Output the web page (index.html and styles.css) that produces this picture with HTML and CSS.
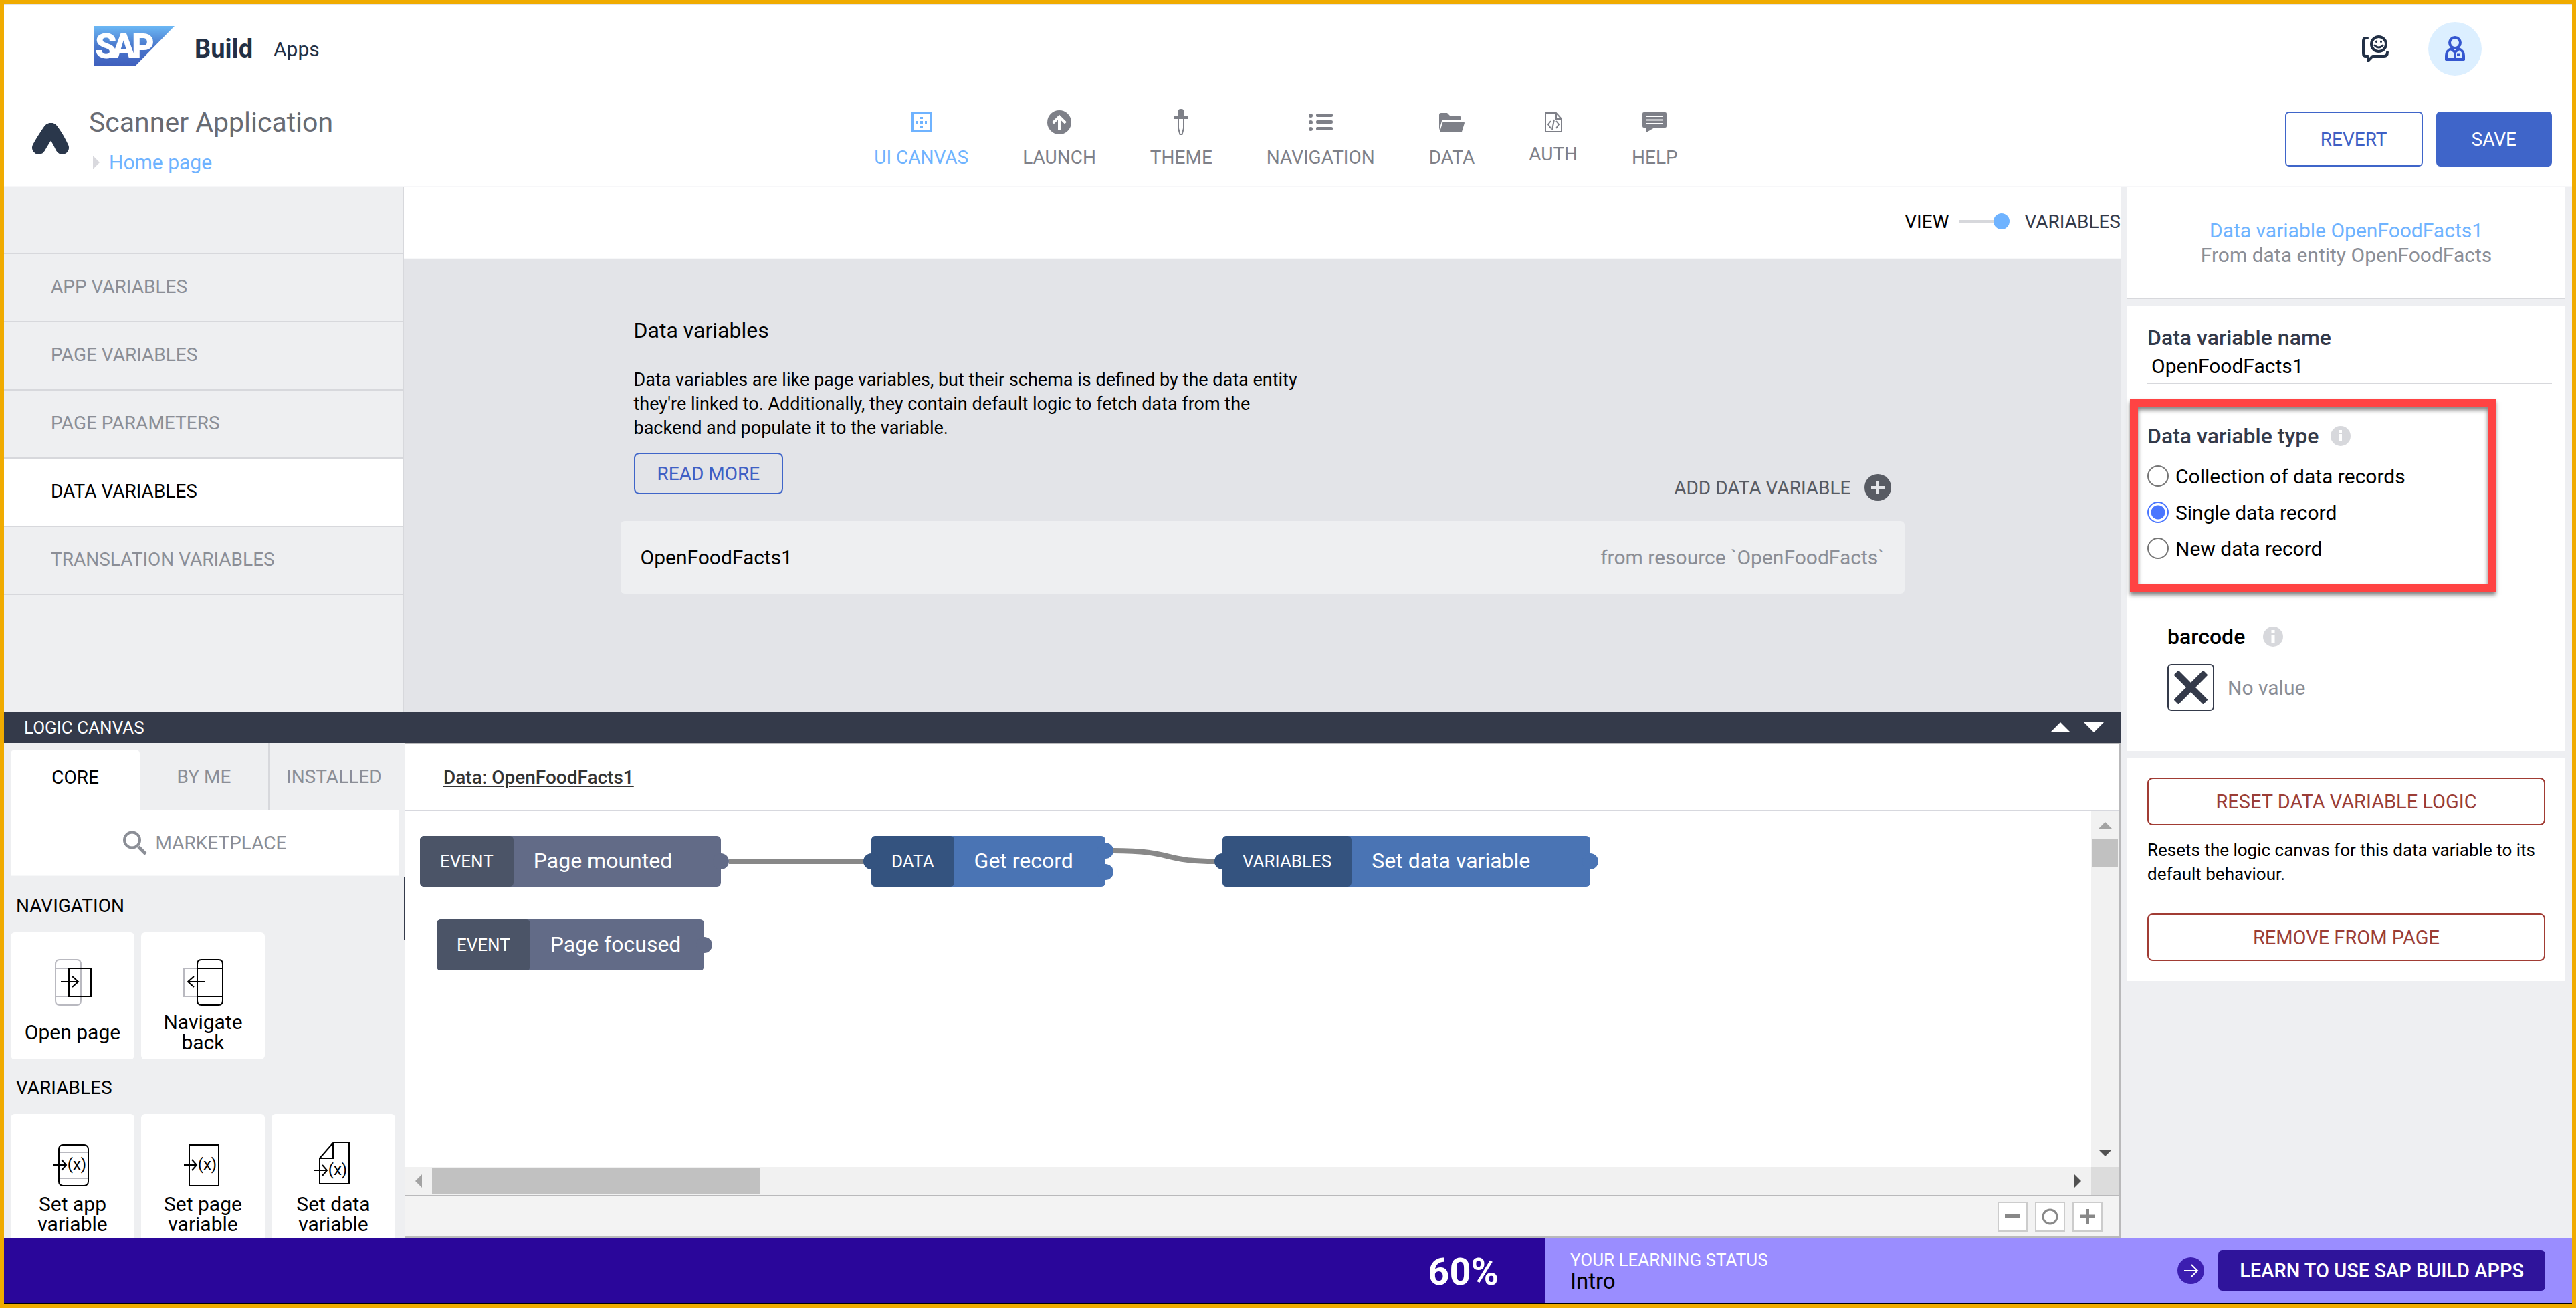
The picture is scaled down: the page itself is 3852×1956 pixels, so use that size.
FILE: index.html
```html
<!DOCTYPE html>
<html lang="en">
<head>
<meta charset="utf-8">
<title>Scanner Application - SAP Build Apps</title>
<link rel="stylesheet" href="styles.css">
</head>
<body>
<div class="app">
  <header class="shell">
    <a class="brand" href="#">
      <svg class="sap" width="120" height="60" viewBox="0 0 120 60" role="img" aria-label="SAP">
        <defs><linearGradient id="sapfill" x1="0" y1="0" x2="0" y2="1"><stop offset="0" stop-color="#6cb8f5"/><stop offset=".5" stop-color="#4a78cc"/><stop offset="1" stop-color="#3f5fbd"/></linearGradient></defs>
        <path d="M0 0H120L61 60H0Z" fill="url(#sapfill)"/>
        <text class="sap-text" x="1 26 56" y="48">SAP</text>
      </svg>
      <span class="brand-name">Build</span><span class="brand-sub">Apps</span>
    </a>
    <div class="shell-tools">
      <button class="icon-btn" aria-label="Feedback">
        <svg width="42" height="42" viewBox="0 0 42 42" fill="none" stroke="#223046" stroke-width="4" stroke-linecap="round" stroke-linejoin="round"><path d="M9 5H7Q3 5 3 9V28Q3 32 7 32H10V39L17 32H34Q39 32 39 26"/><circle cx="26" cy="14" r="11"/><path d="M20 16Q26 22 32 16" stroke-width="3"/><path d="M22.500 10V10.500M29.500 10V10.500" stroke-width="3"/></svg>
      </button>
      <button class="icon-btn avatar" aria-label="Profile">
        <svg width="32" height="38" viewBox="0 0 32 38" fill="none" stroke="#3557d0" stroke-width="4" stroke-linejoin="round"><circle cx="16" cy="10" r="8"/><path d="M3 35V29Q3 22 10 19L16 24 22 19Q29 22 29 29V35Z"/><path d="M16 22V34"/><path d="M19 28H24" stroke-width="3"/></svg>
      </button>
    </div>
  </header>

  <div class="header">
    <div class="project">
      <svg width="56" height="48" viewBox="0 0 56 48" fill="none" stroke="#2a374b" stroke-width="20" stroke-linecap="round" stroke-linejoin="round" aria-hidden="true"><path d="M10 37Q16 26 27 10"/><path d="M45 37Q38 22 29 10"/></svg>
      <div class="project-text">
        <h1 class="project-title">Scanner Application</h1>
        <a class="crumb" href="#"><svg width="10" height="20" viewBox="0 0 10 20" aria-hidden="true"><path d="M0 0L10 10 0 20Z" fill="#d9d9de"/></svg>Home page</a>
      </div>
    </div>
    <nav class="nav">
      <a class="nav-item active" href="#"><span class="nav-icon"><svg width="30" height="30" viewBox="0 0 30 30"><path d="M0 0H30V30H0ZM3 3V27H27V3Z" fill-rule="evenodd" fill="currentColor"/><path d="M13 7h4v3h-4zM13 13h4v4h-4zM13 20h4v3h-4zM7 13h3v4H7zM20 13h3v4h-3z" fill="currentColor"/></svg></span>UI CANVAS</a>
      <a class="nav-item" href="#"><span class="nav-icon"><svg width="36" height="36" viewBox="0 0 36 36"><circle cx="18" cy="18" r="18" fill="currentColor"/><path d="M18 30V10M8.500 19L18 9.500 27.500 19" fill="none" stroke="#fff" stroke-width="4"/></svg></span>LAUNCH</a>
      <a class="nav-item" href="#"><span class="nav-icon"><svg width="22" height="40" viewBox="0 0 22 40"><path d="M6 10V5Q6 0 11 0T16 5V10H22V15H0V10Z" fill="currentColor"/><path d="M7 15V29L9.500 38H12.500L15 29V15" fill="none" stroke="currentColor" stroke-width="2"/></svg></span>THEME</a>
      <a class="nav-item" href="#"><span class="nav-icon"><svg width="36" height="28" viewBox="0 0 36 28" fill="currentColor"><circle cx="3" cy="4" r="3"/><circle cx="3" cy="14" r="3"/><circle cx="3" cy="24" r="3"/><rect x="11" y="1" width="25" height="5" rx="2"/><rect x="11" y="11" width="25" height="5" rx="2"/><rect x="11" y="21" width="25" height="5" rx="2"/></svg></span>NAVIGATION</a>
      <a class="nav-item" href="#"><span class="nav-icon"><svg width="38" height="28" viewBox="0 0 38 28" fill="currentColor"><path d="M0 26V3Q0 0 3 0H12L17 5H31Q33 5 33 7V10H6Q4 10 4 12Z"/><path d="M7 13H36Q38 13 38 15L34 28H1L5 15Q5 13 7 13Z"/></svg></span>DATA</a>
      <a class="nav-item" href="#"><span class="nav-icon short"><svg width="26" height="30" viewBox="0 0 26 30" fill="none" stroke="currentColor" stroke-width="2"><path d="M1 1H17L25 10V29H1ZM17 1V10H25M9 13L5 18 9 24M17 13L21 18 17 24M14 11L11 26"/></svg></span>AUTH</a>
      <a class="nav-item" href="#"><span class="nav-icon"><svg width="36" height="30" viewBox="0 0 36 30"><path d="M2 0H34Q36 0 36 2V21Q36 23 34 23H18L6 30V23H2Q0 23 0 21V2Q0 0 2 0Z" fill="currentColor"/><path d="M5 6H31M5 11.500H31M5 17H31" stroke="#fff" stroke-width="2"/></svg></span>HELP</a>
    </nav>
    <div class="actions">
      <button class="btn btn-outline">REVERT</button>
      <button class="btn btn-solid">SAVE</button>
    </div>
  </div>

  <div class="workspace">
    <main class="main">
      <section class="variables">
        <nav class="side">
          <a class="side-item" href="#">APP VARIABLES</a>
          <a class="side-item" href="#">PAGE VARIABLES</a>
          <a class="side-item" href="#">PAGE PARAMETERS</a>
          <a class="side-item active" href="#">DATA VARIABLES</a>
          <a class="side-item" href="#">TRANSLATION VARIABLES</a>
        </nav>
        <div class="stage">
          <div class="mode">
            <span class="mode-view">VIEW</span>
            <button class="switch" role="switch" aria-checked="true" aria-label="Show variables"><span class="switch-line"></span><span class="switch-dot"></span></button>
            <span class="mode-vars">VARIABLES</span>
          </div>
          <div class="sheet">
            <div class="sheet-head">
              <div class="intro">
                <h2 class="intro-title">Data variables</h2>
                <p class="intro-text">Data variables are like page variables, but their schema is defined by the data entity they're linked to. Additionally, they contain default logic to fetch data from the backend and populate it to the variable.</p>
                <button class="btn-read">READ MORE</button>
              </div>
              <button class="add">ADD DATA VARIABLE
                <svg width="40" height="40" viewBox="0 0 40 40" aria-hidden="true"><circle cx="20" cy="20" r="20" fill="#585b63"/><path d="M20 10V30M10 20H30" stroke="#e3e4e8" stroke-width="4"/></svg>
              </button>
            </div>
            <a class="resource" href="#"><span>OpenFoodFacts1</span><span class="resource-from">from resource `OpenFoodFacts`</span></a>
          </div>
        </div>
      </section>

      <section class="logic">
        <div class="logic-bar">
          <span>LOGIC CANVAS</span>
          <span class="logic-arrows">
            <button class="icon-btn" aria-label="Expand"><svg width="30" height="15" viewBox="0 0 30 15"><path d="M0 15L15 0 30 15Z" fill="#fff"/></svg></button>
            <button class="icon-btn" aria-label="Collapse"><svg width="30" height="15" viewBox="0 0 30 15"><path d="M0 0L15 15 30 0Z" fill="#fff"/></svg></button>
          </span>
        </div>
        <div class="logic-body">
          <aside class="palette">
            <div class="tabs">
              <button class="tab active">CORE</button>
              <button class="tab">BY ME</button>
              <button class="tab">INSTALLED</button>
            </div>
            <button class="market"><svg width="36" height="36" viewBox="0 0 36 36" fill="none" stroke="#8b8e96" aria-hidden="true"><circle cx="13.500" cy="14" r="11.500" stroke-width="4"/><path d="M23 24L34 35" stroke-width="5"/></svg>MARKETPLACE</button>
            <div class="palette-list">
              <h3 class="palette-title">NAVIGATION</h3>
              <div class="tiles">
                <button class="tile"><svg width="60" height="70" viewBox="0 0 60 70" fill="none" stroke-width="2"><path d="M10 1H36Q42 1 42 8V62Q42 69 36 69H10Q4 69 4 62V8Q4 1 10 1ZM4 14H42M4 56H42" stroke="#b9b9c0"/><rect x="24" y="14" width="33" height="42" stroke="#000"/><path d="M12 34H37M29 26L38 34 29 42" stroke="#000"/></svg><span class="tile-label">Open page</span></button>
                <button class="tile"><svg width="60" height="70" viewBox="0 0 60 70" fill="none" stroke-width="2"><path d="M21 14H1V56H21" stroke="#b9b9c0"/><path d="M27 1H53Q59 1 59 8V62Q59 69 53 69H27Q21 69 21 62V8Q21 1 27 1ZM21 14H59M21 56H59" stroke="#000"/><path d="M33 34H8M16 26L7 34 16 42" stroke="#000"/></svg><span class="tile-label">Navigate back</span></button>
              </div>
              <h3 class="palette-title">VARIABLES</h3>
              <div class="tiles">
                <button class="tile"><svg width="60" height="70" viewBox="0 0 60 70" fill="none" stroke-width="2"><path d="M9 17H53M9 56H53" stroke="#b9b9c0"/><rect x="9" y="6" width="44" height="61" rx="6" stroke="#000"/><path d="M1 36H20M13 28L20 36 13 44" stroke="#000"/><text class="var" x="36" y="43">(x)</text></svg><span class="tile-label">Set app variable</span></button>
                <button class="tile"><svg width="60" height="70" viewBox="0 0 60 70" fill="none" stroke-width="2"><rect x="9" y="6" width="44" height="61" stroke="#000"/><path d="M1 36H20M13 28L20 36 13 44" stroke="#000"/><text class="var" x="36" y="43">(x)</text></svg><span class="tile-label">Set page variable</span></button>
                <button class="tile"><svg width="60" height="70" viewBox="0 0 60 70" fill="none" stroke-width="2"><path d="M9 26L29 3H53V64H9ZM29 3V26H9" stroke="#000"/><path d="M1 44H20M13 36L20 44 13 52" stroke="#000"/><text class="var" x="36" y="51">(x)</text></svg><span class="tile-label">Set data variable</span></button>
              </div>
            </div>
          </aside>

          <div class="flow">
            <div class="flow-tabs"><a class="flow-tab" href="#">Data: OpenFoodFacts1</a></div>
            <div class="flow-view">
              <div class="canvas">
                <svg class="links" width="2400" height="300" viewBox="0 0 2400 300" fill="none" stroke="#888" stroke-width="8" aria-hidden="true"><path d="M484 75H686"/><path d="M1059 59C1150 59 1130 75 1211 75"/></svg>
                <div class="node event n-mounted"><span class="tag">EVENT</span><span class="name">Page mounted</span><i class="port out"></i></div>
                <div class="node event n-focused"><span class="tag">EVENT</span><span class="name">Page focused</span><i class="port out"></i></div>
                <div class="node action n-get"><i class="port in"></i><span class="tag">DATA</span><span class="name">Get record</span><i class="port out first"></i><i class="port out second"></i></div>
                <div class="node action n-set"><i class="port in"></i><span class="tag">VARIABLES</span><span class="name">Set data variable</span><i class="port out"></i></div>
              </div>
              <div class="vbar">
                <span class="bar-end"><svg width="20" height="10" viewBox="0 0 20 10"><path d="M0 10L10 0 20 10Z" fill="#a3a3a3"/></svg></span>
                <span class="vthumb"></span>
                <span class="bar-end last"><svg width="20" height="10" viewBox="0 0 20 10"><path d="M0 0L10 10 20 0Z" fill="#505050"/></svg></span>
              </div>
              <div class="hbar">
                <span class="bar-end"><svg width="10" height="20" viewBox="0 0 10 20"><path d="M10 0L0 10 10 20Z" fill="#a3a3a3"/></svg></span>
                <span class="hthumb"></span>
                <span class="bar-end last"><svg width="10" height="20" viewBox="0 0 10 20"><path d="M0 0L10 10 0 20Z" fill="#505050"/></svg></span>
              </div>
              <div class="corner"></div>
            </div>
            <div class="zoom">
              <button class="zoom-btn" aria-label="Zoom out"><svg width="25" height="25" viewBox="0 0 25 25"><path d="M1 12H24" stroke="#888" stroke-width="6"/></svg></button>
              <button class="zoom-btn" aria-label="Reset zoom"><svg width="25" height="25" viewBox="0 0 25 25"><circle cx="12.500" cy="12.500" r="10.500" fill="none" stroke="#888" stroke-width="3"/></svg></button>
              <button class="zoom-btn" aria-label="Zoom in"><svg width="25" height="25" viewBox="0 0 25 25"><path d="M1 12H24M12.500 1V24" stroke="#888" stroke-width="5"/></svg></button>
            </div>
          </div>
        </div>
      </section>
    </main>

    <aside class="props">
      <div class="props-head"><a class="props-link" href="#">Data variable OpenFoodFacts1</a><span>From data entity OpenFoodFacts</span></div>
      <div class="props-form">
        <label class="label" for="varname">Data variable name</label>
        <input class="field" id="varname" type="text" value="OpenFoodFacts1">
        <div class="types" role="radiogroup" aria-labelledby="typelabel">
          <div class="label with-info"><span id="typelabel">Data variable type</span><svg width="30" height="30" viewBox="0 0 30 30" aria-hidden="true"><circle cx="15" cy="15" r="15" fill="#d7d8dc"/><path d="M15 6V10M15 12V23" stroke="#fff" stroke-width="4"/></svg></div>
          <div class="options">
            <label class="option"><input class="radio" type="radio" name="type">Collection of data records</label>
            <label class="option"><input class="radio" type="radio" name="type" checked>Single data record</label>
            <label class="option"><input class="radio" type="radio" name="type">New data record</label>
          </div>
          <div class="highlight"></div>
        </div>
        <div class="param">
          <div class="label with-info wide"><span class="param-name" id="barcode">barcode</span><svg width="30" height="30" viewBox="0 0 30 30" aria-hidden="true"><circle cx="15" cy="15" r="15" fill="#d7d8dc"/><path d="M15 5V9M15 12V24" stroke="#fff" stroke-width="5"/></svg></div>
          <div class="binding">
            <button class="bind" aria-labelledby="barcode"><svg width="50" height="50" viewBox="0 0 50 50"><path d="M3 3L47 47M47 3L3 47" stroke="#343a4a" stroke-width="10"/></svg></button>
            <span>No value</span>
          </div>
        </div>
      </div>
      <div class="props-actions">
        <button class="btn-danger">RESET DATA VARIABLE LOGIC</button>
        <p class="hint">Resets the logic canvas for this data variable to its default behaviour.</p>
        <button class="btn-danger">REMOVE FROM PAGE</button>
      </div>
    </aside>
  </div>

  <footer class="learn">
    <div class="progress" style="width:60%">60%</div>
    <div class="status">
      <div class="status-text"><span class="status-label">YOUR LEARNING STATUS</span><span class="status-step">Intro</span></div>
      <button class="icon-btn" aria-label="Next"><svg width="40" height="40" viewBox="0 0 40 40" fill="none"><circle cx="20" cy="20" r="20" fill="#3c1eb0"/><path d="M10 20H29M21 11L30 20 21 29" stroke="#fff" stroke-width="2"/></svg></button>
      <button class="btn-learn">LEARN TO USE SAP BUILD APPS</button>
    </div>
  </footer>
</div>
</body>
</html>
```
FILE: styles.css
```css
* { box-sizing: border-box; }

body {
  margin: 0;
  font-family: Roboto, "Liberation Sans", sans-serif;
  font-size: 28px;
  color: #000;
}

h1, h2, h3, p { margin: 0; font-weight: 400; }
a { color: inherit; text-decoration: none; }
button {
  margin: 0;
  padding: 0;
  border: 0;
  background: none;
  font: inherit;
  color: inherit;
  cursor: pointer;
}
svg { display: block; flex: none; }

.app {
  display: flex;
  flex-direction: column;
  height: 100vh;
  border: 6px solid #f0ab00;
  background: #fff;
}

/* Shell bar */
.shell {
  display: flex;
  justify-content: space-between;
  align-items: center;
  height: 132px;
  padding: 0 135px;
  border-top: 2px solid #e3e4e8;
  flex: none;
}
.brand { display: flex; align-items: center; color: #223046; }
.sap { margin-bottom: 8px; }
.sap-text { font-size: 52px; font-weight: 900; fill: #fff; }
.brand-name { margin-left: 30px; font-size: 38px; font-weight: 700; }
.brand-sub { margin-left: 31px; font-size: 30px; }
.shell-tools { display: flex; align-items: center; gap: 58px; }
.avatar {
  display: grid;
  place-items: center;
  width: 80px;
  height: 80px;
  border-radius: 50%;
  background: #dcefff;
}

/* Project header */
.header {
  display: grid;
  grid-template-columns: 1fr auto 1fr;
  align-items: center;
  height: 142px;
  padding: 0 30px 0 42px;
  border-bottom: 2px solid #f7f7f9;
  flex: none;
}
.project { display: flex; align-items: center; gap: 29px; }
.project-text { padding-top: 10px; }
.project-title { font-size: 41px; line-height: 60px; color: #686b73; }
.crumb {
  display: flex;
  align-items: center;
  gap: 14px;
  padding-left: 6px;
  font-size: 30px;
  line-height: 60px;
  color: #6fb3ff;
}
.nav { display: flex; align-items: center; gap: 81px; margin-right: 48px; color: #7e8088; }
.nav-item {
  display: flex;
  flex-direction: column;
  align-items: center;
  gap: 16px;
  line-height: 34px;
}
.nav-item.active { color: #6fb3ff; }
.nav-icon { display: flex; align-items: center; height: 40px; }
.nav-icon.short { height: 30px; }
.actions { display: flex; justify-content: flex-end; gap: 20px; }
.btn { height: 82px; padding: 0 51px; border: 2px solid #3f65c9; border-radius: 6px; }
.btn-outline { color: #3f5fc4; }
.btn-solid { background: #3f65c9; color: #fff; }

/* Workspace */
.workspace {
  display: grid;
  grid-template-columns: 1fr 675px;
  flex: 1;
  min-height: 0;
  background: #eeeff2;
}
.main { display: flex; flex-direction: column; min-width: 0; min-height: 0; }
.variables { display: flex; height: 784px; flex: none; }

.side { width: 598px; padding-top: 98px; flex: none; background: #eeeff1; border-right: 1px solid #d7d8dc; color: #8b8e96; }
.side-item {
  display: flex;
  align-items: center;
  height: 102px;
  padding: 0 0 4px 70px;
  border-top: 2px solid #d7d8dc;
}
.side-item:last-child { height: 104px; border-bottom: 2px solid #d7d8dc; }
.side-item.active { background: #fff; color: #000; }

.stage { display: flex; flex-direction: column; flex: 1; min-width: 0; background: #e3e4e8; }
.mode {
  display: flex;
  justify-content: flex-end;
  align-items: center;
  height: 108px;
  padding-bottom: 4px;
  background: #fff;
  border-bottom: 2px solid #f7f8f9;
}
.mode-vars { color: #343a4a; }
.switch { display: flex; align-items: center; margin: 0 22px 0 16px; }
.switch-line { width: 51px; height: 4px; background: #d7d8dc; }
.switch-dot { width: 24px; height: 24px; border-radius: 50%; background: #6fb3ff; }

.sheet { width: 100%; max-width: 1920px; margin: 0 auto; padding-top: 86px; }
.sheet-head {
  display: flex;
  justify-content: space-between;
  align-items: flex-end;
  padding: 0 20px 30px;
}
.intro { padding-bottom: 10px; }
.intro-title { font-size: 32px; line-height: 40px; }
.intro-text { max-width: 1010px; margin: 36px 0 19px; font-size: 27px; line-height: 36px; }
.btn-read { height: 62px; padding: 0 33px; border: 2px solid #3f65c9; border-radius: 8px; color: #3f5fc4; }
.add { display: flex; align-items: center; gap: 20px; color: #585b63; }
.resource {
  display: flex;
  justify-content: space-between;
  align-items: center;
  height: 109px;
  padding: 0 30px;
  border-radius: 6px;
  background: #eeeff1;
  font-size: 30px;
}
.resource-from { color: #8b8e96; }

/* Logic canvas */
.logic { display: flex; flex-direction: column; flex: 1; min-height: 0; }
.logic-bar {
  display: flex;
  justify-content: space-between;
  align-items: center;
  height: 47px;
  padding: 0 25px 0 30px;
  background: #343a4a;
  color: #fff;
  font-size: 26px;
  flex: none;
}
.logic-arrows { display: flex; gap: 20px; }
.logic-body { display: flex; flex: 1; min-height: 0; }

.palette {
  position: relative;
  display: flex;
  flex-direction: column;
  width: 600px;
  padding: 0 10px;
  overflow: hidden;
  flex: none;
  background: #eeeff1;
}
.palette::after {
  content: "";
  position: absolute;
  top: 200px;
  right: 0;
  width: 2px;
  height: 95px;
  background: #343a4a;
}
.tabs { display: grid; grid-template-columns: repeat(3, 1fr); align-items: end; flex: none; }
.tab { height: 100px; color: #8b8e96; border-right: 2px solid #d7d8dc; }
.tab:last-child { border-right: 0; }
.tab.active {
  height: 90px;
  padding-bottom: 8px;
  border: 0;
  border-radius: 6px 6px 0 0;
  background: #fff;
  color: #000;
}
.market {
  display: flex;
  justify-content: center;
  align-items: center;
  gap: 13px;
  height: 99px;
  border-bottom: 1px solid #f7f8f9;
  background: #fff;
  color: #8b8e96;
  flex: none;
}
.palette-list { padding-top: 2px; }
.palette-title { padding: 26px 8px 22px; font-size: 28px; line-height: 34px; }
.tiles { display: flex; gap: 10px; }
.tile {
  display: flex;
  flex-direction: column;
  align-items: center;
  gap: 10px;
  width: 185px;
  height: 190px;
  padding: 40px 10px 10px;
  border-radius: 6px;
  background: #fff;
}
.tile-label {
  display: flex;
  align-items: center;
  justify-content: center;
  height: 60px;
  font-size: 30px;
  line-height: 30px;
}
.var { font-size: 24px; text-anchor: middle; fill: #000; stroke: none; }

.flow {
  display: flex;
  flex-direction: column;
  flex: 1;
  min-width: 0;
  border: 2px solid #b9b9bb;
  border-left: 0;
  background: #fff;
}
.flow-tabs {
  display: flex;
  align-items: center;
  height: 100px;
  padding-left: 57px;
  border-bottom: 2px solid #d7d8de;
  flex: none;
}
.flow-tab { color: #333; font-weight: 500; text-decoration: underline; text-decoration-thickness: 2px; text-underline-offset: 3px; }
.flow-view {
  display: grid;
  grid-template: 1fr 42px / 1fr 42px;
  flex: 1;
  min-height: 0;
}
.canvas { position: relative; overflow: hidden; }
.links { position: absolute; top: 0; left: 0; }
.node {
  position: absolute;
  display: flex;
  height: 76px;
  border-radius: 6px;
  color: #fff;
}
.n-mounted { left: 22px; top: 37px; width: 450px; }
.n-focused { left: 47px; top: 162px; width: 400px; }
.n-get { left: 697px; top: 37px; width: 350px; }
.n-set { left: 1222px; top: 37px; width: 550px; }
.event { background: #626b87; --tag: #4b5467; --body: #626b87; }
.action { background: #4a74b4; --tag: #34537f; --body: #4a74b4; }
.tag {
  display: flex;
  align-items: center;
  padding: 0 30px;
  border-radius: 6px;
  background: var(--tag);
  font-size: 26px;
}
.name { display: flex; align-items: center; padding: 0 0 2px 30px; font-size: 32px; }
.port { position: absolute; top: 26px; width: 24px; height: 24px; border-radius: 50%; }
.port.out { right: -12px; background: var(--body); }
.port.in { left: -12px; background: var(--tag); }
.port.first { top: 10px; }
.port.second { top: 42px; }

.vbar { display: flex; flex-direction: column; align-items: center; background: #f1f1f1; }
.hbar { display: flex; align-items: center; background: #f1f1f1; }
.corner { background: #dcdcdc; }
.bar-end { display: grid; place-items: center; width: 42px; height: 42px; flex: none; }
.hbar .bar-end { width: 40px; }
.vbar .last { margin-top: auto; }
.hbar .last { margin-left: auto; }
.vthumb { width: 38px; height: 42px; background: #c1c1c1; }
.hthumb { width: 491px; height: 38px; background: #c1c1c1; }

.zoom {
  display: flex;
  justify-content: flex-end;
  align-items: center;
  gap: 11px;
  height: 62px;
  padding-right: 25px;
  border-top: 2px solid #b9b9bb;
  background: #f3f3f3;
  flex: none;
}
.zoom-btn { display: grid; place-items: center; width: 45px; height: 45px; border: 2px solid #ccc; background: #fff; }

/* Properties panel */
.props { padding: 0 10px; }
.props-head {
  display: flex;
  flex-direction: column;
  align-items: center;
  justify-content: center;
  height: 167px;
  margin-bottom: 10px;
  border-bottom: 2px solid #d7d8dc;
  background: #fff;
  font-size: 30px;
  line-height: 37px;
  color: #8b8e96;
}
.props-link { color: #6fb3ff; }
.props-form { padding: 28px 20px 60px 30px; margin-bottom: 10px; background: #fff; }
.label { display: block; font-size: 32px; font-weight: 500; line-height: 40px; color: #343a4a; }
.with-info { display: flex; align-items: center; gap: 18px; }
.with-info.wide { gap: 27px; }
.field {
  display: block;
  width: 100%;
  height: 49px;
  padding: 0 6px 2px;
  border: 0;
  border-bottom: 2px solid #d7d8dc;
  background: none;
  font: inherit;
  font-size: 30px;
  color: #000;
}
.types { position: relative; margin-top: 58px; }
.options { margin-top: 13px; font-size: 30px; }
.option { display: flex; align-items: center; gap: 10px; height: 54px; }
.radio {
  appearance: none;
  width: 32px;
  height: 32px;
  margin: 0;
  border: 2px solid #767676;
  border-radius: 50%;
  background: #fff;
}
.radio:checked { border-color: #4a76ff; background: radial-gradient(circle, #4a76ff 10px, #fff 11px); }
.highlight {
  position: absolute;
  top: -35px;
  left: -26px;
  width: 547px;
  height: 289px;
  border: 12px solid #ff4343;
  box-shadow: 0 4px 6px rgba(0, 0, 0, .5), inset 0 4px 6px rgba(0, 0, 0, .5);
  pointer-events: none;
}
.param { margin: 85px 0 0 30px; }
.param-name { color: #000; }
.binding { display: flex; align-items: center; gap: 20px; margin-top: 21px; font-size: 30px; color: #8b8e96; }
.bind {
  display: grid;
  place-items: center;
  width: 70px;
  height: 70px;
  border: 2px solid #343a4a;
  border-radius: 6px;
}
.props-actions { padding: 30px; background: #fff; }
.btn-danger {
  display: block;
  width: 100%;
  height: 71px;
  border: 2px solid #a13c34;
  border-radius: 8px;
  font-size: 29px;
  color: #9b3d36;
}
.hint { margin: 19px 0 41px; font-size: 26px; line-height: 36px; }

/* Learning bar */
.learn { display: flex; height: 99px; border-bottom: 2px solid #000; background: #9a8dff; flex: none; }
.progress {
  display: flex;
  align-items: center;
  justify-content: flex-end;
  padding: 4px 69px 0 0;
  background: #2a069a;
  color: #fff;
  font-size: 56px;
  font-weight: 700;
  flex: none;
}
.status { display: flex; align-items: center; gap: 21px; flex: 1; padding: 0 40px 0 38px; }
.status-text { display: flex; flex-direction: column; flex: 1; line-height: 31px; }
.status-label { font-size: 26px; color: #fff; }
.status-step { font-size: 33px; }
.btn-learn { height: 60px; padding: 0 32px; border-radius: 6px; background: #2f149b; color: #fff; font-size: 29px; font-weight: 500; }
```
